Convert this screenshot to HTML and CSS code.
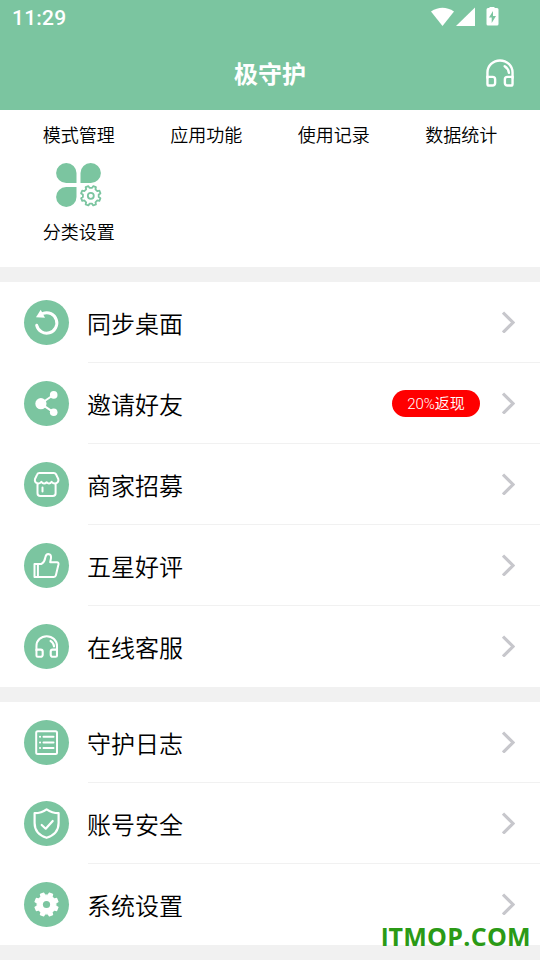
FILE: index.html
```html
<!DOCTYPE html>
<html lang="zh-CN">
<head>
<meta charset="utf-8">
<title>极守护</title>
<link rel="stylesheet" href="styles.css">
</head>
<body>
<svg class="defs" aria-hidden="true">
  <symbol id="phones" viewBox="0 0 27 27">
    <path d="M1.400 18V13a12.100 11.600 0 0 1 24.200 0V18"/>
    <path d="M1.400 17.200H6.400a2.400 2.400 0 0 1 2.400 2.400V23.200a2.400 2.400 0 0 1-2.400 2.400H3a1.600 1.600 0 0 1-1.600-1.600ZM25.600 17.200H20.600a2.400 2.400 0 0 0-2.400 2.400V23.200a2.400 2.400 0 0 0 2.400 2.400H24a1.600 1.600 0 0 0 1.600-1.600Z"/>
    <path d="M18 7Q21.600 9.300 22.100 13.300"/>
  </symbol>
  <symbol id="gear" viewBox="-11 -11 22 22">
    <path d="M7.900 1.300L9.700 2.400 8.600 5.150 6.500 4.650 4.650 6.500 5.150 8.600 2.400 9.700 1.300 7.900-1.300 7.900-2.400 9.700-5.150 8.600-4.650 6.500-6.500 4.650-8.600 5.150-9.700 2.400-7.900 1.300-7.900-1.300-9.700-2.400-8.600-5.150-6.500-4.650-4.650-6.500-5.150-8.600-2.400-9.700-1.300-7.900 1.300-7.900 2.400-9.700 5.150-8.600 4.650-6.500 6.500-4.650 8.600-5.150 9.700-2.400 7.900-1.300Z"/>
  </symbol>
</svg>
<header class="header">
  <div class="status">
    <span class="time">11:29</span>
    <svg class="status-icons" width="68" height="20" viewBox="0 0 68 20">
      <path d="M0 4.500Q11.500-3 23 4.500L11.500 19Z"/>
      <path d="M44 0.500V19H25Z"/>
      <path fill-rule="evenodd" d="M58.500 0H63.500V1H66a1.500 1.500 0 0 1 1.500 1.500V17a1.500 1.500 0 0 1-1.500 1.500H57a1.500 1.500 0 0 1-1.500-1.500V2.500A1.500 1.500 0 0 1 57 1H58.500ZM62 4L58 10.500H60.700V16L65 9H62Z"/>
    </svg>
  </div>
  <div class="titlebar">
    <span></span>
    <h1 class="title">极守护</h1>
    <svg class="support" width="28" height="28"><use href="#phones"/></svg>
  </div>
</header>
<main>
  <section class="grid">
    <div class="cell">模式管理</div>
    <div class="cell">应用功能</div>
    <div class="cell">使用记录</div>
    <div class="cell">数据统计</div>
    <div class="cell">
      <svg class="clover" width="46" height="46" viewBox="0 0 46 46">
        <path d="M20.500 20H10.200A10.200 10 0 1 1 20.500 10ZM24.500 20V10A10.200 10 0 1 1 34.800 20ZM20.500 24V34A10.200 10 0 1 1 10.200 24Z"/>
        <use class="cog" href="#gear" x="23.800" y="21.800" width="22" height="22"/>
        <circle class="cog" cx="34.800" cy="32.800" r="3"/>
      </svg>
      <span>分类设置</span>
    </div>
  </section>
  <section class="list">
    <div class="row">
      <svg class="icon" viewBox="0 0 45 45"><path class="thick" d="M12.700 25.300A10.200 10.200 0 1 0 19 13.400"/><path class="solid" d="M16.700 9.700 21 17.700 12 17.300Z"/></svg>
      <div class="body"><span class="label">同步桌面</span><svg class="chevron" viewBox="0 -0.5 13 22"><path d="M1 1 11 11 1 21"/></svg></div>
    </div>
    <div class="row">
      <svg class="icon" viewBox="0 0 45 45"><path d="M29.700 13.700 16.700 22.700 29.700 31.300"/><circle class="solid" cx="16.900" cy="22.700" r="5.600"/><circle class="solid" cx="29.700" cy="13.900" r="3.800"/><circle class="solid" cx="29.700" cy="31.200" r="3.800"/></svg>
      <div class="body"><span class="label">邀请好友</span><span class="badge">20%返现</span><svg class="chevron" viewBox="0 -0.5 13 22"><path d="M1 1 11 11 1 21"/></svg></div>
    </div>
    <div class="row">
      <svg class="icon" viewBox="0 0 45 45"><path d="M13.500 21.300Q10.200 20.300 11 17L13.200 12.300Q13.800 10.900 15.300 10.900H29.800Q31.300 10.900 32 12.300L34.300 17Q35 20.300 31.700 21.300Q29.400 21.800 27.600 19.800Q25 23 22.600 20.200Q20 23 17.400 19.800Q16 21.800 13.500 21.300ZM13.500 21.500V31.200Q13.500 34 16.300 34H28.800Q31.600 34 31.600 31.200V21.500M18.500 25.500V29.500"/></svg>
      <div class="body"><span class="label">商家招募</span><svg class="chevron" viewBox="0 -0.5 13 22"><path d="M1 1 11 11 1 21"/></svg></div>
    </div>
    <div class="row">
      <svg class="icon" viewBox="0 0 45 45"><path d="M10.500 20.900H13.900V34H10.500ZM13.900 20.900H17.500Q20.700 18.800 21.300 14.500Q21.900 11 24.300 11Q27.400 11.200 27 15L26.200 19.300H33Q34.800 19.300 34.500 21.200L31.900 32.300Q31.500 34 29.800 34H13.900"/></svg>
      <div class="body"><span class="label">五星好评</span><svg class="chevron" viewBox="0 -0.5 13 22"><path d="M1 1 11 11 1 21"/></svg></div>
    </div>
    <div class="row">
      <svg class="icon headset" viewBox="0 0 45 45"><use href="#phones" x="11.200" y="11" width="23" height="23"/></svg>
      <div class="body"><span class="label">在线客服</span><svg class="chevron" viewBox="0 -0.5 13 22"><path d="M1 1 11 11 1 21"/></svg></div>
    </div>
  </section>
  <section class="list">
    <div class="row">
      <svg class="icon" viewBox="0 0 45 45"><rect x="12.200" y="11.200" width="20.800" height="22.800" rx="1.500"/><path d="M16 16.700H16.100M19.500 16.700H29.500M16 22.500H16.100M19.500 22.500H29.500M16 28H16.100M19.500 28H29.500"/></svg>
      <div class="body"><span class="label">守护日志</span><svg class="chevron" viewBox="0 -0.5 13 22"><path d="M1 1 11 11 1 21"/></svg></div>
    </div>
    <div class="row">
      <svg class="icon shield" viewBox="0 0 45 45"><path d="M22.600 8.300Q28 12 34.600 12.200V22Q34.600 33 22.600 36.800Q10.600 33 10.600 22V12.200Q17.500 12 22.600 8.300ZM17.700 24 21.700 27.700 28.700 20"/></svg>
      <div class="body"><span class="label">账号安全</span><svg class="chevron" viewBox="0 -0.5 13 22"><path d="M1 1 11 11 1 21"/></svg></div>
    </div>
    <div class="row">
      <svg class="icon" viewBox="0 0 45 45"><use class="solid rounded" href="#gear" x="9.500" y="9.500" width="26" height="26"/><circle class="hole" cx="22.500" cy="22.500" r="3.600"/></svg>
      <div class="body"><span class="label">系统设置</span><svg class="chevron" viewBox="0 -0.5 13 22"><path d="M1 1 11 11 1 21"/></svg></div>
    </div>
  </section>
</main>
<div class="watermark"><span class="plain">I</span>TMOP.COM</div>
</body>
</html>
```
FILE: styles.css
```css
* { box-sizing: border-box; }
body {
  margin: 0;
  height: 960px;
  overflow: hidden;
  background: #f1f1f1;
  color: #000;
  font-family: Roboto, "Noto Sans CJK SC", sans-serif;
}
.defs { display: none; }
.header {
  height: 110px;
  background: #7bc5a0;
  color: #fff;
}
.status {
  height: 36px;
  display: flex;
  justify-content: space-between;
  padding: 0 41px 0 12px;
}
.time {
  font-size: 21px;
  font-weight: 500;
  line-height: 36px;
  letter-spacing: 0.2px;
}
.status-icons { margin-top: 7px; fill: #fff; }
.titlebar {
  height: 74px;
  display: grid;
  grid-template-columns: 1fr auto 1fr;
  align-items: center;
  padding-right: 26.500px;
  padding-left: 26.500px;
}
.title {
  margin: 0;
  padding-top: 4px;
  font-size: 24px;
  font-weight: 700;
  line-height: 36px;
}
.support {
  justify-self: end;
  fill: none;
  stroke: #fff;
  stroke-width: 2.3;
  stroke-linecap: round;
}
.grid {
  height: 157px;
  padding: 12px 15px 0;
  display: grid;
  grid-template-columns: repeat(4, 1fr);
  grid-template-rows: 40px auto;
  background: #fff;
  font-size: 18px;
  font-weight: 350;
  line-height: 27px;
}
.cell {
  display: flex;
  flex-direction: column;
  align-items: center;
}
.clover { margin: 1px 0 10px; fill: #7bc5a0; }
.cog { fill: none; stroke: #7bc5a0; stroke-width: 1.8; stroke-linejoin: round; }
.list {
  margin-top: 15px;
  background: #fff;
}
.row {
  height: 81px;
  padding-left: 24px;
  display: flex;
  align-items: center;
  gap: 19px;
}
.icon {
  width: 45px;
  height: 45px;
  flex: none;
  border-radius: 50%;
  background: #7bc5a0;
  fill: none;
  stroke: #fff;
  stroke-width: 2;
  stroke-linecap: round;
  stroke-linejoin: round;
}
.icon .thick { stroke-width: 3; }
.icon .solid { fill: #fff; stroke: none; }
.icon .rounded { stroke: #fff; stroke-width: 1; }
.icon .hole { fill: #7bc5a0; stroke: none; }
.icon.shield { stroke-width: 2.2; }
.icon.headset { stroke-width: 2.5; }
.body {
  flex: 1;
  height: 81px;
  padding: 0 25px 0 0;
  display: flex;
  align-items: center;
  border-bottom: 1px solid #f1f1f1;
}
.row:last-child .body { border-bottom-color: transparent; }
.label {
  flex: 1;
  margin-left: -1px;
  padding-top: 5px;
  font-size: 24px;
  font-weight: 350;
  line-height: 36px;
}
.badge {
  width: 88px;
  height: 27px;
  margin-right: 22px;
  padding-top: 1px;
  border-radius: 14px;
  background: #f00;
  color: #fff;
  font-size: 15px;
  font-weight: 350;
  line-height: 27px;
  text-align: center;
}
.chevron {
  width: 13px;
  height: 22px;
  fill: none;
  stroke: #c7c7cc;
  stroke-width: 3.1;
}
.watermark {
  position: absolute;
  right: 9px;
  bottom: 6px;
  color: #2b9a16;
  font: 700 25px/34px "Open Sans", "Noto Sans", sans-serif;
  letter-spacing: 0.3px;
}
.plain { font-family: "Liberation Sans", sans-serif; }
```
